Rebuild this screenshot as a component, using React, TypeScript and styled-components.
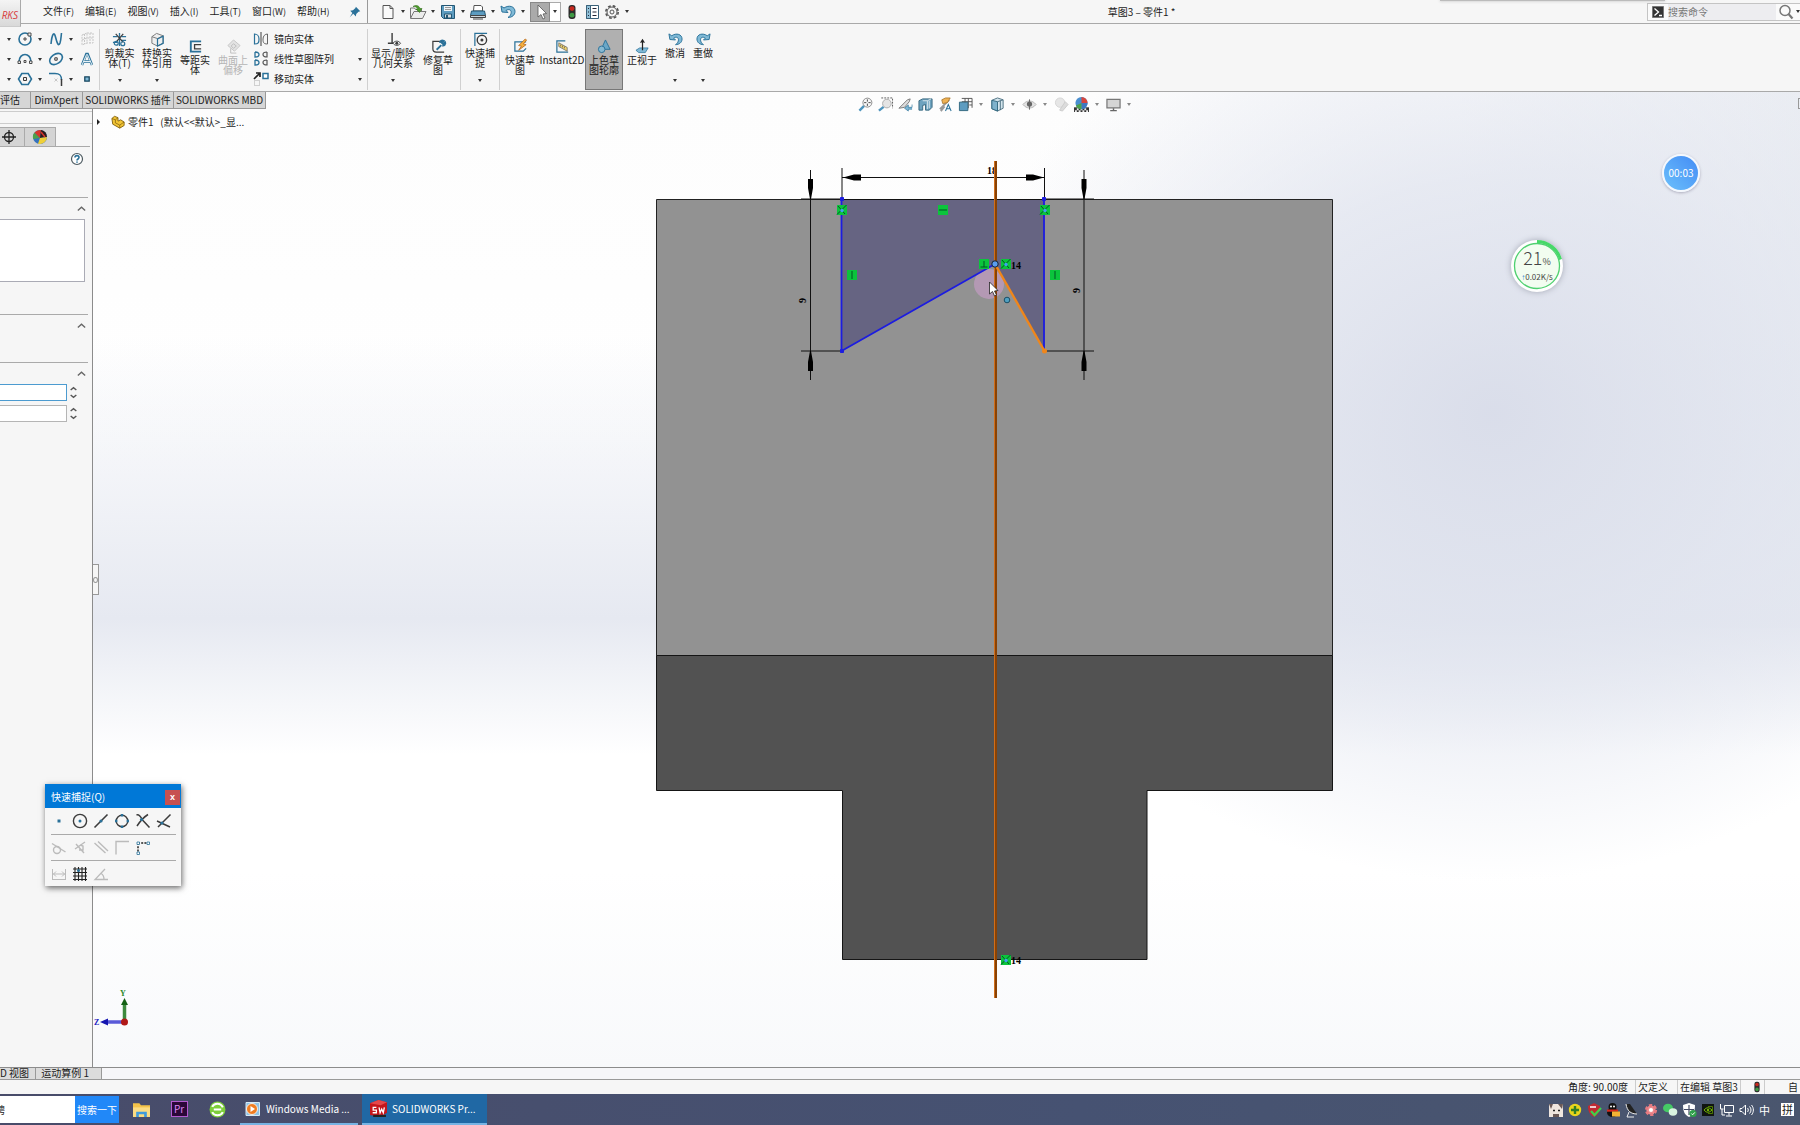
import React, { ReactNode } from 'react';
import styled, { createGlobalStyle, css } from 'styled-components';

const BLUE = '#2a7199';
const LIGHT = '#7fb9d6';
const DARK = '#3c3c3c';

const GlobalStyle = createGlobalStyle`
  * {
    box-sizing: border-box;
  }
  body {
    margin: 0;
    background: #f6f6f6;
    color: #1c1c1c;
    font-family: 'Noto Sans CJK SC', 'Noto Sans', sans-serif;
    font-size: 10px;
    line-height: 10px;
  }
  button, input {
    font: inherit;
    color: inherit;
    border: none;
    border-radius: 0;
    padding: 0;
    margin: 0;
    background: none;
    outline: none;
  }
`;

const Page = styled.div`
  min-height: 100vh;
  display: flex;
  flex-direction: column;
  overflow: hidden;
`;

const Svg = styled.svg<{ $size?: number }>`
  width: ${({ $size }) => $size || 16}px;
  height: ${({ $size }) => $size || 16}px;
  flex: none;
  display: block;
  fill: none;
  overflow: visible;
`;

const icons: Record<string, ReactNode> = {
  pin: <path d="M9 2l5 5-2 .6-2.6 2.6L9 13 6 10l-4 4 3-5L2.500 6.500l3.200-.4L8.500 3.500z" fill={BLUE} />,
  file: (
    <>
      <path d="M3 1.500h7l3 3v10H3z" fill="#fafafa" stroke="#555" />
      <path d="M10 1.500v3h3" stroke="#555" />
    </>
  ),
  open: (
    <>
      <path d="M.5 14V4h4l1 1.500h6V8" fill="#f2f2f2" stroke="#777" />
      <path d="M.5 14.500L4 7.500h12l-3.500 7z" fill="#ececec" stroke="#777" />
      <path d="M3 2.500c3-2 6-1 7 2h2L9.500 8.500 6 5h2C7 3 5 2.500 3 2.500z" fill="#4b9a2a" stroke="#34701c" strokeWidth=".6" />
    </>
  ),
  save: (
    <>
      <path d="M1.500 1.500h13v13h-11l-2-2z" fill="#5d9cc0" stroke="#235673" />
      <path d="M4 2h8v5H4z" fill="#eef4f7" />
      <path d="M5 3.500h6M5 5.500h6" stroke="#999" />
      <path d="M4.500 10h7v4h-7z" fill="#d5dde1" stroke="#235673" />
      <path d="M6 11h2v3H6z" fill="#235673" />
    </>
  ),
  print: (
    <>
      <path d="M4 1.500h7l1.500 1.500v4h-9z" fill="#fff" stroke="#555" />
      <path d="M1.500 7h13l1 4.500H.5z" fill="#5d9cc0" stroke="#235673" />
      <path d="M.5 11.500h15v2H.5z" fill="#cfd8dc" stroke="#444" />
      <path d="M3 15h10" stroke="#444" />
    </>
  ),
  undo: (
    <path d="M1 2l1 6 6 .5-2-2c3-2 6-.5 5 3-.5 2-1.500 3-3 4 4 0 7-2.500 7-6 0-5-6-7-11-3.500z" fill={LIGHT} stroke={BLUE} />
  ),
  redo: (
    <path d="M15 2l-1 6-6 .5 2-2c-3-2-6-.5-5 3 .5 2 1.500 3 3 4-4 0-7-2.500-7-6 0-5 6-7 11-3.500z" fill={LIGHT} stroke={BLUE} />
  ),
  cursor: <path d="M5 1v12l3-2.500 2 4.500 2-1-2-4 3.500-.5z" fill="#fff" stroke="#555" strokeWidth=".8" />,
  traffic: (
    <>
      <rect x="4.500" y="1" width="7" height="14" rx="3" fill="#2c2c2c" />
      <circle cx="8" cy="4.600" r="2.400" fill="#c8281e" />
      <circle cx="8" cy="11.200" r="2.400" fill="#3f9a45" />
    </>
  ),
  list: (
    <>
      <path d="M2.500 1.500h12v13h-12z" fill="#fff" stroke="#3a6179" />
      <path d="M2.500 1.500h4v13h-4z" fill="#8fbfd6" stroke="#3a6179" />
      <path d="M8.500 4.500h4M8.500 8h4M8.500 11.500h4M4 4.500h1M4 8h1M4 11.500h1" stroke="#223" />
    </>
  ),
  gear: (
    <>
      <circle cx="8" cy="8" r="6.200" stroke="#555" strokeWidth="1.600" strokeDasharray="2.800 2.070" />
      <circle cx="8" cy="8" r="5" stroke="#555" />
      <circle cx="8" cy="8" r="2" stroke="#555" />
    </>
  ),
  corner: <path d="M-1 4h3v4H-1M-1 8h2v6h-2" stroke={BLUE} />,
  circle: (
    <>
      <circle cx="8" cy="8" r="6" stroke={BLUE} strokeWidth="1.600" />
      <path d="M7 7h2v2H7zM11 2h3v3h-3z" fill="#eee" stroke={DARK} strokeWidth=".9" />
    </>
  ),
  arc: (
    <>
      <path d="M2 11C2 1 14 1 14 11" stroke={BLUE} strokeWidth="1.600" />
      <path d="M1 10h2.500v2.500H1zM12.500 10H15v2.500h-2.500zM7 9.500h2v2H7z" fill="#eee" stroke={DARK} strokeWidth=".9" />
    </>
  ),
  hexagon: (
    <>
      <path d="M4.800 2.500h6.400L14.500 8l-3.300 5.500H4.800L1.500 8z" stroke={BLUE} strokeWidth="1.600" />
      <path d="M6.500 6.500h3v3h-3z" fill="#eee" stroke={DARK} />
    </>
  ),
  spline: <path d="M3 13C4 3 6 0 7.500 6s3 10 4.500 6c1-3 1-6 1.500-10" stroke={BLUE} strokeWidth="1.600" />,
  ellipse: (
    <>
      <ellipse cx="8" cy="8" rx="7" ry="4.800" transform="rotate(-35 8 8)" stroke={BLUE} strokeWidth="1.600" />
      <path d="M6.800 6.800h2.400v2.400H6.800z" fill="#eee" stroke={DARK} />
    </>
  ),
  fillet: (
    <>
      <path d="M1 2.500h6c5 0 6.500 2 6.500 6.500" stroke={BLUE} strokeWidth="1.500" />
      <path d="M13.500 8v7" stroke={DARK} strokeWidth="1.500" />
      <path d="M6.500 7.500l3 3M9.500 7.500l-3 3" stroke="#bbb" strokeWidth=".8" />
    </>
  ),
  plane: <path d="M3 4l5-2v10l-5 2zM8 2h6v10H8M5.500 3v10M11 2v10M3 9l5-2h6" stroke="#c6c6c6" strokeDasharray="2 1" />,
  letter: (
    <>
      <path d="M3 14L7.300 3h1.400L13 14M5 10.500h6" stroke={BLUE} strokeWidth="2.400" />
      <path d="M3 14L7.600 3.500h.8L13 14M5 10.500h6" stroke="#e6f1f6" />
    </>
  ),
  point: <path d="M5.800 5.800h4.400v4.400H5.800z" fill={LIGHT} stroke="#17465f" strokeWidth="1.300" />,
  trim: (
    <>
      <path d="M8 1v14M1 5h5M10 5h5M1 11h5M10 9h5" stroke={BLUE} strokeWidth="1.400" />
      <path d="M4 2l8 9M12 2L5 10" stroke={DARK} strokeWidth="1.300" />
      <circle cx="4.500" cy="12" r="2.100" stroke={BLUE} strokeWidth="1.300" />
      <circle cx="11.500" cy="12.500" r="2.100" stroke={BLUE} strokeWidth="1.300" />
    </>
  ),
  convert: (
    <>
      <path d="M2 5l5-3.500L14 4v8l-6 3-6-3z" fill="#efefef" stroke="#777" />
      <path d="M2 5l6 2 6-3M8 7v8" stroke="#777" />
      <path d="M8 7.500l6-3v7.500l-6 3z" stroke={BLUE} strokeWidth="1.300" />
    </>
  ),
  offset: (
    <>
      <path d="M14 2.500H3v11h11" stroke={BLUE} strokeWidth="2" />
      <path d="M14 6H7v4.500h7" stroke={DARK} strokeWidth="1.400" />
    </>
  ),
  surface: (
    <>
      <path d="M8 1l7 6-6 6-7-6z" fill="#e3e3e3" stroke="#c4c4c4" />
      <path d="M8 5l3 2.500-3 2.500L5.500 7.500zM5 10v5h6" stroke="#bdbdbd" />
    </>
  ),
  mirror: (
    <>
      <path d="M8 1v14" stroke={DARK} />
      <path d="M1.500 3v10c4 0 4.500-1.500 4.500-5C6 5 4 3 1.500 3z" stroke={BLUE} strokeWidth="1.200" />
      <path d="M14.500 3v10c-4 0-4.500-1.500-4.500-5 0-3 2-5 4.500-5z" stroke="#666" />
    </>
  ),
  pattern: (
    <>
      <path d="M2 1v5c3 0 4-.5 4-2.500M2 1c3 0 4 1 4 2.500M2 9v5c3 0 4-.5 4-2.500M2 9c3 0 4 1 4 2.500" stroke={BLUE} strokeWidth="1.300" />
      <path d="M14 1v5c-3 0-4-.5-4-2.500M14 1c-3 0-4 1-4 2.500M14 9v5c-3 0-4-.5-4-2.500M14 9c-3 0-4 1-4 2.500" stroke="#555" strokeWidth="1.200" />
    </>
  ),
  move: (
    <>
      <path d="M1 8l5-5M3 2h4v4" stroke="#222" strokeWidth="1.700" />
      <path d="M10 2.500h5v5h-5z" stroke={BLUE} strokeWidth="1.500" fill="#fff" />
      <path d="M1.500 9.500h5v5h-5z" stroke="#aaa" strokeDasharray="1 1" />
    </>
  ),
  relations: (
    <>
      <path d="M6.500 1v11M2 12h8" stroke={DARK} strokeWidth="1.500" />
      <path d="M7.500 12c2-3 6-3 8 0-2 3-6 3-8 0z" fill="#fff" stroke={DARK} />
      <circle cx="11.500" cy="12" r="1.600" fill={DARK} />
    </>
  ),
  repair: (
    <>
      <path d="M14 2.500H2v8c0 2 1.500 3.500 3.500 3.500H14" stroke={DARK} strokeWidth="1.300" />
      <path d="M6 11.500l5-5M9.500 4c0-2 2-3 4-2l-2 2 1.500 1.500 2-2c1 2-1 4-3 3.500" stroke={BLUE} strokeWidth="2" />
    </>
  ),
  snap: (
    <>
      <path d="M2 15V1.500h13" stroke={BLUE} strokeWidth="1.300" />
      <circle cx="9.500" cy="8.500" r="5" stroke={DARK} strokeWidth="1.500" />
      <circle cx="9.500" cy="8.500" r="1.600" fill={DARK} />
    </>
  ),
  rapid: (
    <>
      <path d="M14 3H2v10h9l3-3" stroke={BLUE} strokeWidth="1.300" />
      <path d="M13 0L6 7l3 .5L6 12l8-6-3-.5L14.500 1z" fill="#f6b23c" stroke="#b2621a" strokeWidth=".8" />
    </>
  ),
  instant: (
    <>
      <path d="M11 2H2v12h12" stroke={BLUE} strokeWidth="1.300" />
      <path d="M4 4l9 5v4l-9-5z" fill="#f1d36c" stroke="#666" strokeWidth=".8" />
      <path d="M6 6v2M8 7v2M10 8v2" stroke="#555" strokeWidth=".8" />
    </>
  ),
  shaded: (
    <>
      <path d="M9 1l5 10H4.500z" fill="#6aa7c7" stroke={BLUE} />
      <circle cx="5" cy="11" r="3.500" fill="#86b9d2" stroke={BLUE} />
    </>
  ),
  normal: (
    <>
      <path d="M1 12l4-2.500h9L11 14.500H4z" fill={LIGHT} stroke={BLUE} strokeWidth=".8" />
      <path d="M8 12V2M6 4l2-3 2 3" stroke="#222" strokeWidth="1.300" />
    </>
  ),
  zoomFit: (
    <>
      <path d="M1.500 14.500l5-5" stroke="#4d94bd" strokeWidth="2.600" />
      <circle cx="10" cy="6" r="4.800" fill="#f6f6f6" stroke="#888" />
      <path d="M10 2.500v7M6.500 6h7" stroke="#444" strokeDasharray="2.400 2.200" />
    </>
  ),
  zoomArea: (
    <>
      <path d="M3.500 1h12v11" stroke="#555" strokeDasharray="2 1.200" />
      <path d="M1 14.500l5-4" stroke="#4d94bd" strokeWidth="2.600" />
      <circle cx="9.500" cy="7" r="4.600" fill="#e4e4e4" stroke="#aaa" />
    </>
  ),
  previous: (
    <>
      <path d="M1 12l9-9 3-1-1 3-5 6z" fill="#ddd" stroke="#777" />
      <path d="M15 8v3h-4V8.500L7 12l4 3v-2h4" fill={LIGHT} stroke={BLUE} strokeWidth=".7" />
    </>
  ),
  section: (
    <>
      <path d="M1 4l4-2h10v9l-3 3H8V8L5 9v5H1z" fill="#6ea3bf" stroke="#38677f" />
      <path d="M5 4h5v9M10 4l4-2M12 4v8" stroke="#dbe7ed" />
    </>
  ),
  annotation: (
    <>
      <path d="M2 13L12 3M3 15l4-5" stroke="#999" strokeWidth="2" />
      <path d="M4 3l4-2h5l-3 5-5 1z" fill="#efb254" stroke="#a06c20" strokeWidth=".8" />
      <path d="M8 15l3-7 3 7M9 12.500h4" stroke={BLUE} strokeWidth="1.100" />
    </>
  ),
  orientation: (
    <>
      <path d="M4 1.500h11v10M7.500 1.500v5M11 1.500V12M4 5h11M12 8.500h3" stroke="#555" />
      <path d="M1.500 5.500h9v9h-9z" fill="#5d9cc0" stroke="#31677f" />
    </>
  ),
  display: (
    <>
      <path d="M2 3.500L8 1l6 2v9l-6 3-6-2.500z" fill="#d5e6ee" stroke="#4c6f80" />
      <path d="M2 3.500L8 5v10l-6-2.500z" fill="#7fb2cc" stroke="#31677f" />
      <path d="M8 5l6-2M11 4v10" stroke="#4c6f80" />
    </>
  ),
  eye: (
    <>
      <path d="M1 8c4-5 10-5 14 0-4 5-10 5-14 0z" fill="#e2e2e2" stroke="#b5b5b5" />
      <circle cx="8" cy="7.500" r="2.800" fill="#666" />
      <path d="M8 2.500v11" stroke="#666" />
    </>
  ),
  appearanceOff: (
    <>
      <circle cx="6.500" cy="6" r="5" fill="#e6e6e6" stroke="#d5d5d5" />
      <path d="M6 14l6-9 3 3-6 7z" fill="#dcdcdc" stroke="#ccc" />
    </>
  ),
  scene: (
    <>
      <path d="M0 11h16v5H0z" fill="#333" />
      <path d="M1 14h2v2H1zM5 14h2v2H5zM9 14h2v2H9zM13 14h2v2h-2zM3 12h2v2H3zM7 12h2v2H7zM11 12h2v2h-2z" fill="#eee" />
      <circle cx="8" cy="6.500" r="6.500" fill="#4a8fd0" />
      <path d="M8 6.500V0a6.500 6.500 0 0 1 6.500 6.500z" fill="#d8453c" />
      <path d="M8 6.500h6.500A6.500 6.500 0 0 1 8 13z" fill="#3f78c0" />
      <path d="M8 6.500V13a6.500 6.500 0 0 1-6-4z" fill="#4ea14c" />
    </>
  ),
  monitor: (
    <>
      <path d="M1 2.500h14v9H1z" fill="#d5d5d5" stroke="#777" strokeWidth="1.300" />
      <path d="M8 12v2M4.500 14.500h7" stroke="#666" strokeWidth="1.500" />
    </>
  ),
  part: (
    <>
      <path d="M1 4l3-2.500L8 3v4l3-1.500 4 2.500v4l-5 3-8-4.500z" fill="#f2c434" stroke="#7d5d0c" />
      <path d="M1 4l4 1.500V9l5 2.500 5-3.500M10 11.500V15M5 5.500L8 3" stroke="#7d5d0c" strokeWidth=".8" />
    </>
  ),
  target: (
    <>
      <circle cx="8" cy="8" r="4.500" stroke="#222" strokeWidth="1.300" />
      <path d="M8 1v14M1 8h14" stroke="#222" strokeWidth="1.300" />
    </>
  ),
  ball: (
    <>
      <circle cx="8" cy="8" r="7" fill="#3572bd" />
      <path d="M8 9L2.500 3.500A7 7 0 0 0 1.200 10z" fill="#4ea14c" />
      <path d="M8 9L2.500 3.500A7 7 0 0 1 9 1z" fill="#d8352c" />
      <path d="M8 9l1-8a7 7 0 0 1 6 7z" fill="#2a1c1c" />
      <path d="M8 9l7-1A7 7 0 0 1 6 14.700z" fill="#f0d038" />
      <path d="M9 3l4 5" stroke="#d8352c" strokeWidth="1.500" />
    </>
  ),
  help: (
    <>
      <circle cx="8" cy="8" r="5.500" fill="#fff" stroke="#4d5a60" strokeWidth="1.200" />
      <path d="M6 6.500c0-2.500 4-2.500 4 0 0 1.500-2 1.500-2 3M8 10.500v1.300" stroke={BLUE} strokeWidth="1.600" />
    </>
  ),
  chevron: <path d="M3.500 10.500L8 6.500l4.500 4" stroke="#666" strokeWidth="1.700" />,
  spinner: <path d="M4.500 5L8 2l3.500 3M4.500 11L8 14l3.500-3" stroke="#555" strokeWidth="1.700" />,
  search: (
    <>
      <circle cx="7" cy="6.500" r="5" stroke="#777" strokeWidth="1.500" />
      <path d="M10.500 10l4 4.500" stroke="#777" strokeWidth="2.200" />
    </>
  ),
  prompt: (
    <>
      <path d="M2.500 2.500h11v11h-11z" fill="#333" stroke="#777" />
      <path d="M4.500 4.500l4 3.500-4 3.500M9 11.500h3" stroke="#fff" strokeWidth="1.300" />
    </>
  ),
  sPoint: <path d="M6.500 6.500h3v3h-3z" fill={BLUE} />,
  sCenter: (
    <>
      <circle cx="8" cy="8" r="6.600" stroke={DARK} strokeWidth="1.400" />
      <circle cx="8" cy="8" r="1.500" fill={BLUE} />
    </>
  ),
  sMid: (
    <>
      <path d="M1.500 14.500l13-13" stroke={DARK} strokeWidth="1.600" />
      <circle cx="8" cy="8" r="1.600" fill={BLUE} />
    </>
  ),
  sQuad: (
    <>
      <circle cx="8" cy="8" r="5.800" stroke={DARK} strokeWidth="1.400" />
      <path d="M6.800 1h2.400v2.400H6.800zM6.800 12.600h2.400V15H6.800zM1 6.800h2.400v2.400H1zM12.600 6.800H15v2.400h-2.400z" fill={BLUE} />
    </>
  ),
  sCross: (
    <>
      <path d="M1.500 2c3-1 5 3 6 5l7 7.500M13 1.500c-5 3-8 7-11 11.500" stroke={DARK} strokeWidth="1.500" />
      <circle cx="6.500" cy="6.500" r="1.600" fill={BLUE} />
    </>
  ),
  sNear: (
    <>
      <path d="M14.500 1.500L2 14M1 8l13 6" stroke={DARK} strokeWidth="1.500" />
      <circle cx="6" cy="10" r="1.600" fill={BLUE} />
    </>
  ),
  sTangent: (
    <>
      <circle cx="6" cy="10" r="3.500" stroke="#bbb" strokeWidth="1.400" />
      <path d="M1 3.500l13.500 8.500" stroke="#bbb" strokeWidth="1.400" />
    </>
  ),
  sPerp: <path d="M13 2L3 9M4 4l8 9M8 5l3 1v4H7" stroke="#bbb" strokeWidth="1.400" />,
  sParallel: <path d="M1.500 3l11 10M5 1.500l10 9.500" stroke="#bbb" strokeWidth="1.400" />,
  sAngle: <path d="M2 14.500v-13h13" stroke="#bbb" strokeWidth="1.400" />,
  sDots: (
    <>
      <path d="M3 3h10M3 3v10" stroke="#222" strokeWidth="1.500" strokeDasharray="2 1.200" />
      <path d="M2 2h2.500v2.500H2zM12 2h2.500v2.500H12zM2 12h2.500v2.500H2z" fill="#fff" stroke={BLUE} strokeWidth=".8" />
    </>
  ),
  sLength: <path d="M1.500 3v11M14.500 3v11M2 8h12M5 5.500L2.500 8 5 10.500M11 5.500L13.500 8 11 10.500M1 13.500h14" stroke="#bbb" />,
  sGrid: (
    <>
      <path d="M3 1v14M6.500 1v14M10 1v14M13.500 1v14M1 3h14M1 6.500h14M1 10h14M1 13.500h14" stroke="#222" strokeWidth="1.100" />
      <circle cx="6.500" cy="4.500" r="1.500" fill={BLUE} />
    </>
  ),
  sDegree: <path d="M15 13.500H2L12 3M8 7.500c2 1 3 3.500 3 6" stroke="#bbb" strokeWidth="1.300" />,
  folder: (
    <>
      <path d="M0 2h6l1.500 2H16v11H0z" fill="#f4c34a" />
      <path d="M0 6h16v9H0z" fill="#fbdc83" />
      <path d="M3 10h10v5h-2.500v-2.500h-5V15H3z" fill="#3f9bdc" />
    </>
  ),
  browser: (
    <>
      <circle cx="8" cy="8" r="7.500" fill="#7dcf3a" />
      <path d="M3 5.500C5 1.500 11 1.500 13 6M13 10.500c-2 4-8 4-10 0M4.500 8h7" stroke="#fff" strokeWidth="1.900" />
    </>
  ),
  player: (
    <>
      <path d="M1 1.500h13.500v13H1z" fill="#8ec3e6" stroke="#d5e9f6" />
      <circle cx="7" cy="8" r="5.500" fill="#ef7d22" stroke="#fff" strokeWidth=".8" />
      <path d="M5.500 5v6l4.500-3z" fill="#fff" />
    </>
  ),
  solid: (
    <>
      <path d="M0 3l8-3 8 2v10l-6 4-10-2z" fill="#c3161c" />
      <path d="M0 3l8-3 8 2-6 3z" fill="#e5484a" />
      <path d="M6 7H3v2.500h3V12H2.500M8.500 7l1 5 1.500-3.500 1.500 3.500 1-5" stroke="#fff" strokeWidth="1.200" />
      <path d="M3 14h12v2H3z" fill="#222" />
    </>
  ),
  tFace: (
    <>
      <path d="M1 2h14v13H1z" fill="#efe6df" />
      <path d="M1 2h4L3 7zM15 2h-5l4 5zM5 12h6v3H5z" fill="#6b5a57" />
      <path d="M5 8.500h2M10 8.500h2" stroke="#222" strokeWidth="1.500" />
    </>
  ),
  tPlus: (
    <>
      <circle cx="8" cy="8" r="6.200" fill="#e9d51c" />
      <path d="M8 4v8M4 8h8" stroke="#2f7d26" strokeWidth="2.400" />
    </>
  ),
  tShield: (
    <>
      <path d="M8 1l6 3c0 6-2 9-6 11-4-2-6-5-6-11z" fill="#c12a32" />
      <path d="M5 9l3.500 4L15 6" stroke="#3ecf4c" strokeWidth="2.200" />
      <path d="M4 5h6" stroke="#fff" strokeWidth="1.500" />
    </>
  ),
  tPenguin: (
    <>
      <circle cx="7.500" cy="5" r="4" fill="#111" />
      <ellipse cx="7.500" cy="10.500" rx="5.500" ry="4.500" fill="#111" />
      <circle cx="6" cy="4.500" r="1" fill="#fff" />
      <circle cx="9" cy="4.500" r="1" fill="#fff" />
      <path d="M2 7.500h11v2.200H2z" fill="#d8281e" />
      <path d="M7 9.500h8v5H7z" fill="#f1b434" />
    </>
  ),
  tDish: (
    <>
      <path d="M2 2c1 7 5 10 11 10L6 2z" fill="#222" />
      <path d="M2 2c1 7 5 10 11 10M5 10l-2 5h7" stroke="#eee" />
    </>
  ),
  tFlower: (
    <>
      <circle cx="8" cy="8" r="4.600" fill="#ee8d90" stroke="#e77a80" strokeWidth="3" strokeDasharray="3 1.800" />
      <circle cx="8" cy="8" r="2" fill="#fff" />
    </>
  ),
  tChat: (
    <>
      <ellipse cx="6" cy="6" rx="5" ry="4.300" fill="#45c965" />
      <ellipse cx="11" cy="10" rx="4.300" ry="3.700" fill="#d9f3e0" />
    </>
  ),
  tDefender: (
    <>
      <path d="M8 1l6 2c0 7-2 10-6 12C4 13 2 10 2 3z" fill="#fff" />
      <path d="M8 3v10M3 7.500h10" stroke="#444c66" strokeWidth="1.200" />
      <circle cx="12" cy="11.500" r="3.600" fill="#2fa04a" />
      <path d="M10.300 11.500l1.300 1.300 2.200-2.400" stroke="#fff" />
    </>
  ),
  tNvidia: (
    <>
      <path d="M2 2h12v12H2z" fill="#101510" />
      <path d="M4 8c2.500-3 5-3 8 0-3 3-5.500 3-8 0z" stroke="#76b900" />
      <path d="M8 4.500h4.500v7H8" stroke="#4c7a00" />
      <circle cx="8" cy="8" r="1.200" fill="#76b900" />
    </>
  ),
  tNetwork: <path d="M5.500 3.500h9v7h-9zM10 10.500v3M7 14h6M1.500 2v5h3M3 7v6h3" stroke="#fff" />,
  tSound: <path d="M2 6.500h2L7.500 3v10L4 9.500H2zM9.500 6c1 1 1 3 0 4M11.500 4.500c2 2 2 5 0 7M13.500 3c2.500 3 2.500 7 0 10" stroke="#fff" />,
};

const Icon = ({ name, size }: { name: string; size?: number }) => (
  <Svg viewBox="0 0 16 16" $size={size} aria-hidden="true">{icons[name]}</Svg>
);

const Caret = styled.span<{ $pale?: boolean }>`
  width: 0;
  height: 0;
  flex: none;
  border: 2px solid transparent;
  border-top: 3px solid ${({ $pale }) => ($pale ? '#888' : '#333')};
  border-bottom: none;
`;

/* ---------- title bar ---------- */
const TitleBar = styled.header`
  height: 24px;
  flex: none;
  display: flex;
  align-items: center;
  border-bottom: 1px solid #a9a9a9;
`;
const Logo = styled.div`
  width: 21px;
  height: 27px;
  align-self: flex-start;
  flex: none;
  z-index: 1;
  display: flex;
  align-items: center;
  justify-content: flex-end;
  padding-right: 2px;
  padding-top: 3px;
  border-right: 1px solid #aaa;
  border-bottom: 1px solid #ccc;
  background: linear-gradient(#f4f4f4, #d9d9d9);
  color: #d8393b;
  font: italic 10px 'Open Sans', sans-serif;
`;
const Menu = styled.nav`
  display: flex;
  gap: 11px;
  margin-left: 22px;
`;
const MenuButton = styled.button`
  white-space: nowrap;
  line-height: 16px;
  small {
    font-size: 9px;
  }
`;
const PinButton = styled.button`
  margin-left: 18px;
  margin-right: 5px;
`;
const QuickBar = styled.div`
  height: 23px;
  display: flex;
  align-items: center;
  border-left: 1px solid #999;
  padding-left: 12px;
`;
const QuickButton = styled.button<{ $active?: boolean; $wide?: boolean }>`
  width: ${({ $wide }) => ($wide ? 30 : 20)}px;
  height: 20px;
  display: flex;
  align-items: center;
  gap: 5px;
  ${({ $active }) => $active && css`
    padding-left: 2px;
    border: 1px solid #888;
    background: #aaa;
  `}
`;
const CaretBox = styled.button`
  width: 11px;
  height: 20px;
  display: flex;
  align-items: center;
  justify-content: center;
  border: 1px solid #aaa;
  border-left: none;
  background: #fff;
  margin-right: 3px;
`;
const DocTitle = styled.div`
  flex: 1;
  padding-left: 474px;
  white-space: nowrap;
`;
const SearchBox = styled.label`
  width: 153px;
  height: 18px;
  flex: none;
  display: flex;
  align-items: center;
  gap: 2px;
  padding-left: 2px;
  border: 1px solid #c4c4c4;
  border-right: none;
  background: #fafafa;
  input {
    width: 108px;
    height: 16px;
    background: #ededf0;
  }
  input::placeholder {
    color: #777;
    opacity: 1;
  }
`;
const WindowShadow = styled.div`
  position: absolute;
  top: 0;
  right: 135px;
  width: 225px;
  height: 1px;
  background: #bbb;
  box-shadow: 0 0 3px #999;
`;

/* ---------- ribbon ---------- */
const Ribbon = styled.div`
  height: 68px;
  flex: none;
  display: flex;
  align-items: stretch;
  overflow: hidden;
  padding-top: 5px;
  border-bottom: 1px solid #a9a9a9;
`;
const SketchGrid = styled.div`
  display: grid;
  grid-template-columns: 31px 31px 31px 20px;
  grid-template-rows: repeat(3, 20px);
  margin-left: -14px;
`;
const SketchTool = styled.button`
  display: flex;
  align-items: center;
  gap: 5px;
`;
const Group = styled.div`
  display: flex;
  height: 61px;
  padding: 0 1px;
  border-left: 1px solid #d0d0d0;
`;
const BigButton = styled.button<{ $width: number; $active?: boolean; $disabled?: boolean }>`
  width: ${({ $width }) => $width}px;
  display: flex;
  flex-direction: column;
  align-items: center;
  justify-content: center;
  padding-bottom: 5px;
  color: ${({ $disabled }) => ($disabled ? '#b5b5b5' : '#1c1c1c')};
  ${({ $active }) => $active && css`
    border: 1px solid #777;
    background: #b0b0b0;
  `}
`;
const BigLabel = styled.span`
  min-height: 20px;
  margin-top: 1px;
  white-space: pre;
`;
const BigCaret = styled.span`
  height: 14px;
  display: flex;
  align-items: flex-end;
`;
const SideList = styled.div`
  width: 114px;
  display: flex;
  flex-direction: column;
  padding-left: 1px;
`;
const SideButton = styled.button`
  height: 20px;
  display: flex;
  align-items: center;
  gap: 5px;
  padding-right: 4px;
  span:nth-of-type(1) {
    flex: 1;
    text-align: left;
  }
`;

const Big = ({ icon, label, width = 38, caret, active, disabled }: {
  icon: string; label: string; width?: number; caret?: boolean; active?: boolean; disabled?: boolean;
}) => (
  <BigButton $width={width} $active={active} $disabled={disabled}>
    <Icon name={icon} size={15}/>
    <BigLabel>{label}</BigLabel>
    {caret && <BigCaret><Caret/></BigCaret>}
  </BigButton>
);

/* ---------- workspace ---------- */
const Workspace = styled.main`
  flex: 1;
  display: grid;
  grid-template-columns: 93px 1fr;
  grid-template-rows: 17px 1fr;
`;
const CommandTabs = styled.div`
  grid-area: 1 / 1 / 2 / 3;
  justify-self: start;
  display: flex;
  z-index: 1;
`;
const CommandTab = styled.button<{ $width: number }>`
  width: ${({ $width }) => $width}px;
  white-space: nowrap;
  border-right: 1px solid #999;
  border-bottom: 1px solid #999;
  background: #d6d6d6;
  &:first-child {
    padding-right: 10px;
  }
`;
const Panel = styled.aside`
  grid-area: 1 / 1 / 3 / 2;
  padding-top: 19px;
  border-right: 1px solid #8c8c8c;
  background: #f6f6f6;
`;
const Grip = styled.div`
  height: 13px;
  border-top: 1px solid #ccc;
  border-bottom: 1px solid #ccc;
`;
const PanelTabs = styled.div`
  height: 20px;
  margin: 3px 2px 0 0;
  display: flex;
  border-bottom: 1px solid #aaa;
`;
const PanelTab = styled.button<{ $width: number }>`
  width: ${({ $width }) => $width}px;
  display: flex;
  align-items: center;
  justify-content: center;
  border: 1px solid #aaa;
  border-left: none;
  border-bottom: none;
  background: #d4d4d4;
  &:first-child {
    padding-right: 6px;
  }
`;
const HelpRow = styled.div`
  height: 50px;
  display: flex;
  justify-content: flex-end;
  padding: 4px 7px 0 0;
`;
const Section = styled.section<{ $height: number }>`
  min-height: ${({ $height }) => $height}px;
  margin-right: 4px;
  border-top: 1px solid #aaa;
`;
const SectionHead = styled.button`
  width: 100%;
  height: 21px;
  display: flex;
  align-items: center;
  justify-content: flex-end;
`;
const SelectionList = styled.div`
  height: 63px;
  margin-right: 3px;
  border: 1px solid #aaabb5;
  border-left: none;
  background: #fff;
`;
const ValueRow = styled.label`
  display: flex;
  align-items: center;
  margin-bottom: 4px;
`;
const ValueInput = styled.input<{ $focus?: boolean }>`
  width: 67px;
  height: 17px;
  background: #fff;
  border: 1px solid ${({ $focus }) => ($focus ? '#4c9bd0' : '#b5b5b5')};
  border-left: none;
`;

const Viewport = styled.section`
  grid-area: 1 / 2 / 3 / 3;
  position: relative;
  overflow: hidden;
  background:
    radial-gradient(ellipse 32% 48% at 82% 33%, rgba(216, 220, 233, .95), rgba(223, 227, 238, .75) 50%, rgba(255, 255, 255, 0)),
    linear-gradient(to bottom, rgba(255, 255, 255, 0) 25%, #e6e9f1 54%, rgba(255, 255, 255, 0) 68%),
    linear-gradient(to right, rgba(232, 235, 241, 0) 80%, rgba(232, 235, 241, .8)) top / 100% 55% no-repeat,
    linear-gradient(to bottom, #fdfdfd, #fff 40%, #fff 80%, #f8f9fb);
`;
const Drawing = styled.svg`
  position: absolute;
  inset: 0;
  width: 100%;
  height: 100%;
  font-family: 'Liberation Serif', serif;
  font-weight: bold;
  font-size: 10px;
`;
const HudBar = styled.div`
  position: relative;
  display: flex;
  align-items: center;
  height: 24px;
  padding-left: 762px;
`;
const HudButton = styled.button`
  width: 20px;
  height: 20px;
  display: flex;
  align-items: center;
  justify-content: center;
`;
const HudCaret = styled.button`
  width: 12px;
  display: flex;
  justify-content: center;
`;
const Tree = styled.div`
  position: relative;
  display: flex;
  align-items: center;
  padding: 0 4px;
  height: 12px;
  white-space: pre;
`;
const TreeArrow = styled.span`
  width: 0;
  height: 0;
  border: 3px solid transparent;
  border-left: 3px solid #222;
  border-right: none;
  margin-right: 11px;
`;
const TreeLabel = styled.span`
  margin-left: 3px;
`;
const Handle = styled.button`
  position: absolute;
  left: 0;
  top: 472px;
  width: 6px;
  height: 31px;
  border: 1px solid #999;
  border-left: none;
  background: #f6f6f6;
  display: flex;
  align-items: center;
  &::before {
    content: '';
    width: 4px;
    height: 4px;
    border: 1px solid #999;
    border-radius: 50%;
  }
`;
const Timer = styled.div`
  position: absolute;
  right: 100px;
  top: 62px;
  width: 38px;
  height: 38px;
  border: 2px solid #f4f8fd;
  border-radius: 50%;
  background: linear-gradient(45deg, #6cc0fb, #438cf5);
  box-shadow: 0 1px 3px #aab;
  display: flex;
  align-items: center;
  justify-content: center;
  color: #fff;
  font-size: 10px;
`;
const Meter = styled.div`
  position: absolute;
  right: 237px;
  top: 148px;
  width: 52px;
  height: 52px;
  border-radius: 50%;
  background: #fff;
  box-shadow: 0 0 6px #a4a8b5;
  display: grid;
  place-items: center;
  svg, > div {
    grid-area: 1 / 1;
  }
`;
const MeterText = styled.div`
  display: flex;
  flex-direction: column;
  align-items: center;
  z-index: 1;
  color: #444;
  strong {
    font: 300 18px/18px 'Noto Sans CJK SC', sans-serif;
  }
  strong small {
    font-size: 9px;
    font-weight: 400;
  }
  span {
    font-size: 8px;
    line-height: 12px;
  }
  i {
    color: #2a7fd0;
    font-style: normal;
    font-family: 'Liberation Sans', sans-serif;
  }
`;
const EdgeMark = styled.span`
  position: absolute;
  right: 0;
  top: 6px;
  width: 2px;
  height: 11px;
  border: 1px solid #999;
  border-right: none;
`;

/* ---------- snap palette ---------- */
const Palette = styled.div`
  position: absolute;
  left: 45px;
  bottom: 239px;
  z-index: 3;
  width: 136px;
  background: #f6f6f6;
  box-shadow: 1px 2px 6px rgba(0, 0, 0, .6);
`;
const PaletteTitle = styled.div`
  height: 24px;
  display: flex;
  align-items: center;
  justify-content: space-between;
  padding: 2px 1px 0 6px;
  background: #0078d7;
  color: #fff;
`;
const CloseButton = styled.button`
  width: 15px;
  height: 15px;
  background: #c75050;
  color: #fff;
  font: bold 9px 'Liberation Sans', sans-serif;
`;
const PaletteRow = styled.div`
  height: 26px;
  display: flex;
  align-items: center;
  gap: 5px;
  margin: 0 5px 0 6px;
  & + & {
    border-top: 1px solid #aaa;
  }
`;

/* ---------- bottom bars ---------- */
const ModelTabs = styled.div`
  height: 13px;
  flex: none;
  display: flex;
  border-top: 1px solid #8c8c8c;
  border-bottom: 1px solid #999;
  background: #f6f6f9;
`;
const ModelTab = styled.button<{ $width: number }>`
  width: ${({ $width }) => $width}px;
  padding: 0 12px 2px 0;
  text-align: right;
  white-space: nowrap;
  border-right: 1px solid #999;
  background: #dcdcdc;
  &:first-child {
    padding-right: 7px;
  }
`;
const StatusBar = styled.footer`
  height: 14px;
  flex: none;
  display: flex;
  align-items: center;
  justify-content: flex-end;
  white-space: nowrap;
  overflow: hidden;
`;
const StatusCell = styled.span<{ $width: number; $inset?: number }>`
  width: ${({ $width }) => $width}px;
  height: 14px;
  line-height: 14px;
  display: flex;
  align-items: center;
  padding-left: ${({ $inset }) => $inset || 2}px;
  & + & {
    border-left: 1px solid #ccc;
  }
`;
const Taskbar = styled.footer`
  height: 31px;
  flex: none;
  display: flex;
  align-items: center;
  background: linear-gradient(to right, #484c6a, #465272 60%, #4a566e);
  color: #fff;
  overflow: hidden;
`;
const TaskSearch = styled.input`
  width: 80px;
  height: 27px;
  margin-left: -5px;
  background: #fff;
  color: #222;
`;
const TaskSearchButton = styled.button`
  width: 44px;
  height: 27px;
  background: #2188f8;
`;
const Shortcuts = styled.div`
  display: flex;
  padding: 0 4px 0 3px;
`;
const Shortcut = styled.button`
  width: 38px;
  display: flex;
  justify-content: center;
`;
const Adobe = styled.span`
  width: 17px;
  height: 16px;
  border: 1px solid #b45ad0;
  background: #2b0838;
  color: #dd88f4;
  line-height: 13px;
`;
const TaskButton = styled.button<{ $width: number; $active?: boolean }>`
  width: ${({ $width }) => $width}px;
  height: 31px;
  margin-right: 4px;
  padding-left: ${({ $active }) => ($active ? 8 : 5)}px;
  display: flex;
  align-items: center;
  gap: 5px;
  white-space: nowrap;
  border-bottom: 2px solid #76b3e3;
  background: ${({ $active }) => ($active ? '#2068a4' : 'transparent')};
`;
const Tray = styled.div`
  margin-left: auto;
  display: flex;
  align-items: center;
  gap: 3px;
  padding-right: 6px;
`;
const InputMode = styled.button`
  font-size: 11px;
  margin: 0 8px 0 2px;
`;
const Pinyin = styled.button`
  width: 13px;
  height: 13px;
  background: #fff;
  color: #222;
  font-size: 11px;
  line-height: 13px;
`;

const menus = [['文件', 'F'], ['编辑', 'E'], ['视图', 'V'], ['插入', 'I'], ['工具', 'T'], ['窗口', 'W'], ['帮助', 'H']];
const sketchTools = [
  'corner', 'circle', 'spline', 'plane',
  'corner', 'arc', 'ellipse', 'letter',
  'corner', 'hexagon', 'fillet', 'point',
];
const hudTools: [string, boolean][] = [
  ['zoomFit', false], ['zoomArea', false], ['previous', false], ['section', false], ['annotation', false],
  ['orientation', true], ['display', true], ['eye', true], ['appearanceOff', false], ['scene', true], ['monitor', true],
];
const snapRows = [
  ['sPoint', 'sCenter', 'sMid', 'sQuad', 'sCross', 'sNear'],
  ['sTangent', 'sPerp', 'sParallel', 'sAngle', 'sDots'],
  ['sLength', 'sGrid', 'sDegree'],
];
const trayIcons = [
  'tFace', 'tPlus', 'tShield', 'tPenguin', 'tDish', 'tFlower',
  'tChat', 'tDefender', 'tNvidia', 'tNetwork', 'tSound',
];

// green relation tag, x and y are its top left corner
const Relation = ({ x, y, kind }: { x: number; y: number; kind: 'h' | 'v' | 'perp' | 'fix' }) => (
  <g transform={`translate(${x} ${y})`}>
    <rect width="10" height="10" fill="#0bc43c"/>
    {kind === 'h' && <path d="M1 5h8" stroke="#052"/>}
    {kind === 'v' && <path d="M5 1v8" stroke="#052"/>}
    {kind === 'perp' && <path d="M5 2v6M1.500 8h7" stroke="#052"/>}
    {kind === 'fix' && (
      <>
        <path d="M0 9.500L9.500 0M1 1l7 8" stroke="#052"/>
        <circle cx="5" cy="5.500" r="1.700" fill="#3fa0f0"/>
      </>
    )}
  </g>
);

const VerticalDimension = ({ x, from, to, textX, textY }: {
  x: number; from: number; to: number; textX: number; textY: number;
}) => (
  <g>
    <path d={`M${x} 170V380M${from} 199H${to}M${from} 351H${to}`} stroke="#111" fill="none"/>
    <path d={`M${x - 2.5} 179h5v9l-2 11h-1l-2-11zM${x - 2.5} 371h5v-9l-2-11h-1l-2 11z`} fill="#000"/>
    <text x={textX} y={textY} transform={`rotate(-90 ${textX} ${textY})`}>9</text>
  </g>
);

const Model = () => (
  <Drawing viewBox="93 92 1707 975" fill="none">
    <path d="M656.500 199.500h676v456h-676z" fill="#929292" stroke="#222"/>
    <path d="M656.500 655.500h676v135h-185.500v169H842.500v-169h-186z" fill="#525252" stroke="#151515"/>

    <path d="M842 199.500h202.500V351L995 264 842 351z" fill="#666482"/>
    <path d="M842 199.500h202.500" stroke="#111"/>
    <path d="M842 168v31M1044.500 168v31M842 177.500h202" stroke="#111"/>
    <path d="M843 177.500l11-3h7v6h-7zM1044 177.500l-11-3h-7v6h7z" fill="#000"/>
    <text x="987" y="174" fill="#000">18</text>
    <g fill="#000">
      <VerticalDimension x={810.5} from={801} to={841} textX={806} textY={303}/>
      <VerticalDimension x={1084} from={1046} to={1094} textX={1080} textY={293}/>
    </g>
    <circle cx="989" cy="284" r="15" fill="#b89ab8" opacity=".9"/>
    <path d="M841.500 199v152l153.500-87M1044 199v152" stroke="#1c1ce0" strokeWidth="1.800"/>
    <path d="M840.500 197.500h3v3h-3zM840.500 349.500h3v3h-3zM1042.500 197.500h3v3h-3z" stroke="#1c1ce0" fill="#1c1ce0"/>

    <path d="M995.500 161v837" stroke="#8a4204" strokeWidth="3"/>
    <path d="M994.500 161v837" stroke="#cf6f1c"/>
    <path d="M995 264l49.500 87" stroke="#f0861a" strokeWidth="2.400"/>
    <circle cx="1044.500" cy="351" r="2.500" fill="#f0861a"/>

    <Relation x={837} y={205} kind="fix"/>
    <Relation x={938} y={205} kind="h"/>
    <Relation x={1040} y={205} kind="fix"/>
    <Relation x={847} y={270} kind="v"/>
    <Relation x={1050} y={270} kind="v"/>
    <Relation x={979} y={259} kind="perp"/>
    <Relation x={1001} y={259} kind="fix"/>
    <Relation x={1001} y={955} kind="fix"/>
    <text x="1011" y="269" fill="#000">14</text>
    <text x="1011" y="964" fill="#000">14</text>

    <circle cx="995" cy="264" r="3.200" fill="#5a9df0" stroke="#123"/>
    <circle cx="1007" cy="300" r="2.800" fill="#4f9fc0" stroke="#1b4f66"/>
    <path d="M989.500 282v12l3-2.500 2 4.500 2-1-2-4 3.500-.5z" fill="#fff" stroke="#222" strokeWidth=".8"/>

    <path d="M124.500 1022v-18" stroke="#3d8a3d" strokeWidth="3.500"/>
    <path d="M121 1005l3.500-7 3.500 7z" fill="#146014"/>
    <path d="M124 1022h-17" stroke="#5a5ad8" strokeWidth="3.500"/>
    <path d="M108 1018.500l-8 3.500 8 3.500z" fill="#1414b0"/>
    <circle cx="124.500" cy="1022" r="3.500" fill="#b01818"/>
    <g fontSize="8">
      <text x="120" y="996" fill="#2c8a2c">Y</text>
      <text x="94" y="1025" fill="#2222c0">Z</text>
    </g>
  </Drawing>
);

export default function App() {
  return (
    <>
      <GlobalStyle/>
      <Page>
        <TitleBar>
          <Logo>RKS</Logo>
          <Menu>
            {menus.map(([label, key]) => (
              <MenuButton key={key}>{label}<small>({key})</small></MenuButton>
            ))}
          </Menu>
          <PinButton aria-label="固定"><Icon name="pin" size={14}/></PinButton>
          <QuickBar>
            {['file', 'open', 'save', 'print', 'undo'].map((name) => (
              <QuickButton key={name} $wide aria-label={name}>
                <Icon name={name}/>
                <Caret/>
              </QuickButton>
            ))}
            <QuickButton $active aria-label="选择"><Icon name="cursor"/></QuickButton>
            <CaretBox aria-label="选择方式"><Caret/></CaretBox>
            <QuickButton aria-label="重建"><Icon name="traffic"/></QuickButton>
            <QuickButton aria-label="文件属性"><Icon name="list"/></QuickButton>
            <QuickButton $wide aria-label="选项"><Icon name="gear"/><Caret/></QuickButton>
          </QuickBar>
          <DocTitle>草图3 – 零件1 *</DocTitle>
          <SearchBox>
            <Icon name="prompt"/>
            <input type="text" placeholder="搜索命令" aria-label="搜索命令"/>
            <Icon name="search"/>
            <Caret/>
          </SearchBox>
          <WindowShadow/>
        </TitleBar>

        <Ribbon>
          <SketchGrid>
            {sketchTools.map((name, i) => (
              <SketchTool key={i} aria-label={name}>
                <Icon name={name}/>
                {i % 4 !== 3 && <Caret/>}
              </SketchTool>
            ))}
          </SketchGrid>
          <Group>
            <Big icon="trim" label={'剪裁实\n体(T)'} width={37} caret/>
            <Big icon="convert" label={'转换实\n体引用'} caret/>
            <Big icon="offset" label={'等距实\n体'}/>
            <Big icon="surface" label={'曲面上\n偏移'} disabled/>
            <SideList>
              <SideButton><Icon name="mirror"/><span>镜向实体</span></SideButton>
              <SideButton><Icon name="pattern"/><span>线性草图阵列</span><Caret/></SideButton>
              <SideButton><Icon name="move"/><span>移动实体</span><Caret/></SideButton>
            </SideList>
          </Group>
          <Group>
            <Big icon="relations" label={'显示/删除\n几何关系'} width={48} caret/>
            <Big icon="repair" label={'修复草\n图'} width={42}/>
          </Group>
          <Group>
            <Big icon="snap" label={'快速捕\n捉'} width={36} caret/>
          </Group>
          <Group>
            <Big icon="rapid" label={'快速草\n图'}/>
            <Big icon="instant" label="Instant2D" width={46}/>
            <Big icon="shaded" label={'上色草\n图轮廓'} active/>
            <Big icon="normal" label="正视于"/>
            <Big icon="undo" label="撤消" width={28} caret/>
            <Big icon="redo" label="重做" width={28} caret/>
          </Group>
        </Ribbon>

        <Workspace>
          <CommandTabs>
            <CommandTab $width={31}>评估</CommandTab>
            <CommandTab $width={52}>DimXpert</CommandTab>
            <CommandTab $width={91}>SOLIDWORKS 插件</CommandTab>
            <CommandTab $width={92}>SOLIDWORKS MBD</CommandTab>
          </CommandTabs>

          <Panel>
            <Grip/>
            <PanelTabs>
              <PanelTab $width={25} aria-label="尺寸"><Icon name="target"/></PanelTab>
              <PanelTab $width={31} aria-label="外观"><Icon name="ball"/></PanelTab>
            </PanelTabs>
            <HelpRow><Icon name="help"/></HelpRow>
            <Section $height={117}>
              <SectionHead aria-label="折叠"><Icon name="chevron" size={13}/></SectionHead>
              <SelectionList/>
            </Section>
            <Section $height={48}>
              <SectionHead aria-label="折叠"><Icon name="chevron" size={13}/></SectionHead>
            </Section>
            <Section $height={60}>
              <SectionHead aria-label="折叠"><Icon name="chevron" size={13}/></SectionHead>
              <ValueRow><ValueInput $focus aria-label="参数 1"/><Icon name="spinner" size={13}/></ValueRow>
              <ValueRow><ValueInput aria-label="参数 2"/><Icon name="spinner" size={13}/></ValueRow>
            </Section>
          </Panel>

          <Viewport>
            <Model/>
            <HudBar>
              {hudTools.map(([name, hasMenu]) => (
                <React.Fragment key={name}>
                  <HudButton aria-label={name}><Icon name={name} size={15}/></HudButton>
                  {hasMenu && <HudCaret aria-label={`${name} menu`}><Caret $pale/></HudCaret>}
                </React.Fragment>
              ))}
            </HudBar>
            <Tree>
              <TreeArrow/>
              <Icon name="part" size={14}/>
              <TreeLabel>{'零件1   (默认<<默认>_显...'}</TreeLabel>
            </Tree>
            <Handle aria-label="隐藏面板"/>
            <EdgeMark/>
            <Timer>00:03</Timer>
            <Meter>
              <Svg viewBox="0 0 52 52" $size={52}>
                <circle cx="26" cy="26" r="22.500" fill="#f2fdf0" stroke="#4fd070" strokeWidth="1.300"/>
                <path d="M26 1.500a24.500 24.500 0 0 1 23.500 18" stroke="#46d868" strokeWidth="3"/>
              </Svg>
              <MeterText>
                <strong>21<small>%</small></strong>
                <span><i>↑</i>0.02K/s</span>
              </MeterText>
            </Meter>
          </Viewport>
        </Workspace>

        <Palette>
          <PaletteTitle>快速捕捉(Q)<CloseButton aria-label="关闭">x</CloseButton></PaletteTitle>
          {snapRows.map((row, i) => (
            <PaletteRow key={i}>
              {row.map((name) => (
                <button key={name} aria-label={name}><Icon name={name}/></button>
              ))}
            </PaletteRow>
          ))}
        </Palette>

        <ModelTabs>
          <ModelTab $width={36}>D 视图</ModelTab>
          <ModelTab $width={66}>运动算例 1</ModelTab>
        </ModelTabs>
        <StatusBar>
          <StatusCell $width={69}>角度: 90.00度</StatusCell>
          <StatusCell $width={42}>欠定义</StatusCell>
          <StatusCell $width={63}>在编辑 草图3</StatusCell>
          <StatusCell $width={24} $inset={10}><Icon name="traffic" size={12}/></StatusCell>
          <StatusCell $width={36} $inset={23}>自</StatusCell>
        </StatusBar>
        <Taskbar>
          <TaskSearch defaultValue="聘" aria-label="搜索"/>
          <TaskSearchButton>搜索一下</TaskSearchButton>
          <Shortcuts>
            <Shortcut aria-label="资源管理器"><Icon name="folder" size={17}/></Shortcut>
            <Shortcut><Adobe>Pr</Adobe></Shortcut>
            <Shortcut aria-label="浏览器"><Icon name="browser" size={17}/></Shortcut>
          </Shortcuts>
          <TaskButton $width={118}><Icon name="player"/>Windows Media ...</TaskButton>
          <TaskButton $width={125} $active><Icon name="solid" size={17}/>SOLIDWORKS Pr...</TaskButton>
          <Tray>
            {trayIcons.map((name) => <Icon key={name} name={name}/>)}
            <InputMode>中</InputMode>
            <Pinyin>拼</Pinyin>
          </Tray>
        </Taskbar>
      </Page>
    </>
  );
}
